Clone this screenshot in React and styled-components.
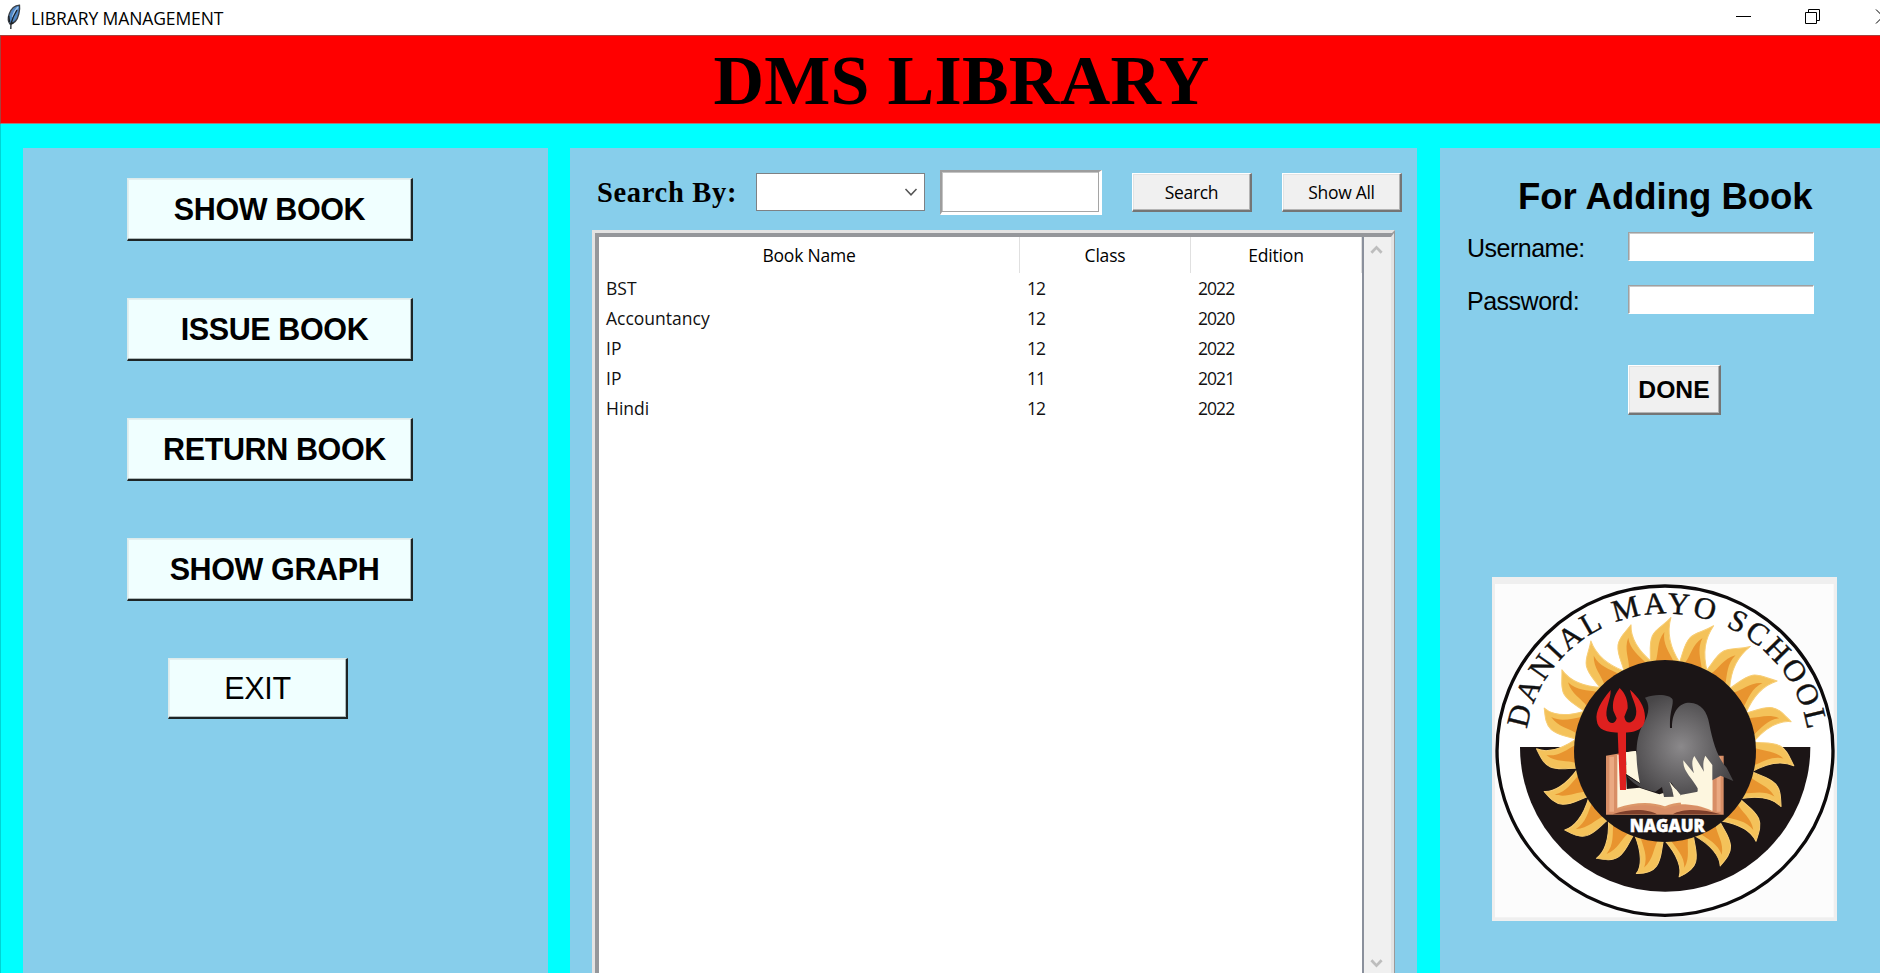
import React from "react";
import styled, { createGlobalStyle } from "styled-components";

const sans = '"Liberation Sans", Arial, sans-serif';
const serif = '"Liberation Serif", "Times New Roman", serif';
const ui = '"Open Sans", "Noto Sans", sans-serif';

const GlobalStyle = createGlobalStyle`
  * { box-sizing: border-box; }
  body { margin: 0; overflow: hidden; background: #00ffff; }
  button, input { margin: 0; border-radius: 0; outline: none; }
`;

const Window = styled.div`
  width: 1880px;
  height: 973px;
  overflow: hidden;
  display: flex;
  flex-direction: column;
  background: #00ffff;
  color: #000;
`;

const TitleBar = styled.header`
  flex: none;
  height: 35px;
  display: flex;
  align-items: flex-start;
  justify-content: space-between;
  background: #fff;
  padding-left: 6px;
`;

const TitleGroup = styled.div`
  display: flex;
  align-items: flex-start;
  gap: 8px;
  padding-top: 4px;
`;

const TitleText = styled.span`
  font: 17.5px/24px ${ui};
  letter-spacing: -0.1px;
  padding-top: 2px;
`;

const WindowControls = styled.div`
  display: flex;
  align-items: flex-start;
  gap: 54px;
  height: 26px;
  padding-top: 4px;
`;

const Banner = styled.h1`
  flex: none;
  height: 89px;
  margin: 0;
  padding-left: 42px;
  border: solid #a8403c;
  border-width: 1px 0 1px 1px;
  border-bottom-color: #a08080;
  background: #ff0000;
  text-align: center;
  font: bold 70px/90px ${serif};
  letter-spacing: 0.25px;
`;

const Body = styled.main`
  flex: 1;
  min-height: 0;
  display: flex;
  gap: 22px;
  padding: 24px 0 0 22px;
  border-left: 1px solid #00d4d4;
`;

const Panel = styled.section`
  flex: none;
  width: ${(p) => p.$width}px;
  height: 830px;
  background: #87ceeb;
`;

const MenuPanel = styled(Panel)`
  display: flex;
  flex-direction: column;
  align-items: flex-start;
  gap: 57px;
  padding: 30px 0 0 104px;
`;

const MenuButton = styled.button`
  width: ${(p) => (p.$small ? 180 : 286)}px;
  height: ${(p) => (p.$small ? 61 : 63)}px;
  margin-left: ${(p) => (p.$small ? 41 : 0)}px;
  padding: 0 0 0 ${(p) => p.$indent || 0}px;
  border: solid;
  border-width: 1px 2px 2px 1px;
  border-color: #dcebec #1d2526 #1d2526 #dcebec;
  box-shadow: inset -1px -1px #aebbbb, inset 1px 1px #e3f0f0;
  background: #f0ffff;
  color: #000;
  font: ${(p) => (p.$small ? "normal" : "bold")} 30.5px/34px ${sans};
  letter-spacing: -0.38px;
  white-space: nowrap;
`;

const BooksPanel = styled(Panel)`
  padding: 22px 0 0 22px;
`;

const SearchBar = styled.div`
  display: flex;
  align-items: flex-start;
  height: 60px;
  padding-left: 5px;
`;

const SearchLabel = styled.label`
  width: 159px;
  padding-top: 7px;
  font: bold 28.5px/32px ${serif};
  letter-spacing: 0.68px;
  white-space: nowrap;
`;

const Combo = styled.div`
  display: flex;
  align-items: center;
  justify-content: flex-end;
  width: 169px;
  height: 38px;
  margin-top: 3px;
  padding-right: 6px;
  border: 1.5px solid #7e8184;
  background: #fff;
`;

const SearchInput = styled.input`
  width: 162px;
  height: 45px;
  margin-left: 15px;
  padding: 4px;
  border: solid;
  border-width: 2px 3px 3px 2px;
  border-color: #9d9d9d #fff #fff #9d9d9d;
  box-shadow: inset -1px -1px #a5a5a5, inset 1px 1px #c4c4c4;
  background: #fff;
`;

const ToolButton = styled.button`
  width: 120px;
  height: 39px;
  margin: 3px 0 0 30px;
  padding: 0;
  border: solid;
  border-width: 1px 2px 2px 1px;
  border-color: #fff #757575 #757575 #fff;
  box-shadow: inset -1px -1px #b4b4b4, inset 1px 1px #e3e3e3;
  background: #f0f0f0;
  color: #000;
  font: 17.5px/24px ${ui};
  letter-spacing: -0.3px;
`;

const TableFrame = styled.div`
  display: flex;
  width: 803px;
  height: 800px;
  border: 3px solid;
  border-color: #e3e3e3 #9a9a9a #9a9a9a #e3e3e3;
`;

const TableInner = styled.div`
  display: flex;
  flex: 1;
  border: solid;
  border-width: 4px 3px 3px 4px;
  border-color: #95979b #e3e3e3 #e3e3e3 #95979b;
`;

const Table = styled.table`
  flex: none;
  width: 763px;
  height: 186px;
  table-layout: fixed;
  border-collapse: separate;
  border-spacing: 0;
  font: 17.5px/24px ${ui};
`;

const TableArea = styled.div`
  flex: 1;
  background: #fff;
  border-right: 2px solid #8a909c;
`;

const HeadCell = styled.th`
  height: 36px;
  padding: 0 0 1px;
  border-right: 1.5px solid #e0e0e0;
  font-weight: 400;
  letter-spacing: -0.2px;
`;

const Cell = styled.td`
  height: 30px;
  padding: 0 0 0 ${(p) => (p.$number ? 7 : 7)}px;
  color: #111;
  letter-spacing: ${(p) => (p.$number ? "-0.95px" : "0")};
`;

const ScrollBar = styled.div`
  width: 27px;
  height: 737px;
  display: flex;
  flex-direction: column;
  align-items: center;
  justify-content: space-between;
  padding: 8px 2px 6px 0;
  background: #f0f0f0;
`;

const AddPanel = styled(Panel)`
  margin-left: 1px;
  padding: 26px 0 0 27px;
`;

const Heading = styled.h2`
  width: 391px;
  height: 58px;
  margin: 0;
  padding: 1px 0 0 51px;
  font: bold 36.5px/44px ${sans};
  white-space: nowrap;
`;

const Field = styled.div`
  display: flex;
  align-items: flex-start;
  height: 52.5px;
`;

const FieldLabel = styled.label`
  width: 161px;
  padding-top: 2px;
  font: 25px/28px ${sans};
  letter-spacing: -0.5px;
`;

const FieldInput = styled.input`
  width: 186px;
  height: 29px;
  padding: 2px;
  border: 1px solid;
  border-color: #a0a0a0 #fff #fff #a0a0a0;
  box-shadow: inset 1px 1px #c8c8c8;
  background: #fff;
`;

const DoneButton = styled(ToolButton)`
  width: 93px;
  height: 50px;
  margin: 28px 0 0 161px;
  font: bold 24.7px/28px ${sans};
  letter-spacing: 0;
  display: block;
`;

const LogoFrame = styled.div`
  width: 345px;
  height: 344px;
  margin: 162px 0 0 25px;
`;

const Feather = () => (
  <svg width="17" height="26" viewBox="0 0 17 26">
    <path d="M13.5 1.2 C9 1.5 5 5 3.2 10 C1.8 14 1.8 17.5 4 20 C8 19.5 11.5 15.5 12.8 10 C13.5 7 14 4 13.5 1.2Z" fill="#4f86c4" stroke="#3a3f46" strokeWidth="1.3" />
    <path d="M12 3 C9 6 7.5 9 6.5 13" stroke="#9cc4ee" strokeWidth="1.6" fill="none" />
    <path d="M11 6 C8.5 10 6.5 14 5.2 19 M2.8 12 L3.6 18 M4.8 25 L5 18.5 M7.5 18.5 L5.5 20" stroke="#1b1e22" strokeWidth="1.3" fill="none" />
  </svg>
);

const Chevron = ({ up, width = 14, color = "#555", weight = 1.5 }) => (
  <svg width={width} height="10" viewBox="0 0 14 10">
    <path d={up ? "M1.5 8 L7 2.2 L12.5 8" : "M1.5 2 L7 7.8 L12.5 2"} fill="none" stroke={color} strokeWidth={weight} />
  </svg>
);

const rays = [
  [575, 158], [455, 180], [335, 228], [248, 315], [195, 430], [172, 552], [195, 680],
  [257, 795], [352, 880], [472, 925], [600, 935], [723, 902], [830, 828], [905, 724],
  [943, 602], [935, 470], [893, 348], [813, 245], [703, 183],
];

const Ray = ({ tip: [x, y] }) => {
  const dx = x - 557;
  const dy = y - 557;
  const reach = Math.hypot(dx, dy);
  const angle = (Math.atan2(dx, -dy) * 180) / Math.PI - 2.9;
  return (
    <g transform={`translate(557 557) rotate(${angle})`}>
      <path
        d={`M-43 -262 C-40 -290 -48 -318 -36 -345 C-26 -366 -4 -374 20 ${-reach} C8 -358 12 -316 47 -262Z`}
        fill="#f4c25a" stroke="#f7cd74" strokeWidth="3" strokeLinejoin="round"
      />
      <path d="M-27 -266 C-16 -295 -24 -326 0 -356 C-6 -320 14 -296 28 -266Z" fill="#e8942f" />
    </g>
  );
};

const Logo = () => (
  <svg width="345" height="344" viewBox="38 36 1035 1032" preserveAspectRatio="none">
    <defs>
      <radialGradient id="bird" gradientUnits="userSpaceOnUse" cx="605" cy="545" r="165">
        <stop offset="0" stopColor="#8b898b" />
        <stop offset="1" stopColor="#484648" />
      </radialGradient>
      <path id="arc" d="M143 492 A420 411 0 0 1 557 146 A432 411 0 0 1 986 507" />
    </defs>
    <rect x="38" y="36" width="1035" height="1032" fill="#efefef" />
    <rect x="47" y="57" width="1016" height="1000" fill="#fcfcfc" />
    <ellipse cx="557" cy="557" rx="504" ry="494" fill="#fff" stroke="#0c0a0b" strokeWidth="10" />
    <path d="M122 546 H993 A435 434 0 0 1 122 546Z" fill="#1c1516" />
    {rays.map((tip) => <Ray key={tip.join()} tip={tip} />)}
    <circle cx="557" cy="558" r="273" fill="#1b1516" />
    <text fontFamily={serif} fontSize="92" fill="#111" stroke="#111" strokeWidth="1.2">
      <textPath href="#arc" textLength="1186">DANIAL MAYO SCHOOL</textPath>
    </text>
    <path d="M380 572 L440 562 V600 H700 V572 H733 V749 H380Z" fill="#d88e66" />
    <path d="M390 575 H404 V740 H390Z M712 575 H724 V740 H712Z" fill="#eaa982" />
    <path d="M440 562 L470 558 L483 655 L443 628Z" fill="#fdf6df" />
    <path d="M414 570 V732 C465 715 515 712 555 728 C600 708 655 715 699 738 V590 L640 620 L560 690 L500 650 L440 625 V566Z" fill="#fdf6df" />
    <path d="M440 626 L485 655 L475 560 H700 V610 L650 670 L600 670 L540 688 L480 668 L442 672Z" fill="#1b1516" />
    <path d="M440 562 L470 558 L483 655 L443 628Z" fill="#fdf6df" />
    <path d="M414 732 C465 715 515 712 557 728 C600 708 655 715 699 738" fill="none" stroke="#dc9769" strokeWidth="7" />
    <path d="M400 748 C460 728 510 734 533 748Z M580 748 C610 730 670 732 725 748Z" fill="#7d3f2b" />
    <path d="M497 398 C530 385 574 389 580 404 C582 425 570 440 572 489 H578 C578 435 603 413 630 413 C666 414 684 440 690 478 C700 530 715 580 742 608 L762 648 L724 632 L690 650 L650 684 L603 692 L574 650 L583 695 L554 696 L548 666 L528 680 C500 674 470 668 442 632 L482 656 C466 580 468 520 490 480 C508 450 514 422 497 398Z" fill="url(#bird)" />
    <path d="M655 670 C640 640 610 620 612 586 L644 625 C638 600 636 588 645 573 L674 620 C670 600 672 585 678 572 L699 600 V738 C670 724 640 718 605 718 L603 690 L655 680Z M570 650 L604 690 L586 694Z" fill="#fdf6df" />
    <path d="M414 475 H440 V675 H422Z" fill="#df201f" />
    <path d="M394 375 C364 410 348 440 352 465 C355 495 380 503 425 503 C475 503 498 490 497 455 C496 424 479 398 452 374 C458 404 480 432 467 459 C458 477 438 478 435 455 L445 430 C446 408 439 386 421 369 C404 390 398 415 402 437 L412 460 C408 480 389 477 384 462 C374 434 395 405 394 375Z" fill="#df201f" />
    <text x="451" y="801" fontFamily={ui} fontWeight="800" fontSize="51" textLength="226" lengthAdjust="spacingAndGlyphs" fill="#fff" stroke="#fff" strokeWidth="1.5">NAGAUR</text>
  </svg>
);

const books = [
  ["BST", "12", "2022"],
  ["Accountancy", "12", "2020"],
  ["IP", "12", "2022"],
  ["IP", "11", "2021"],
  ["Hindi", "12", "2022"],
];

export default function App() {
  return (
    <Window>
      <GlobalStyle />
      <TitleBar>
        <TitleGroup>
          <Feather />
          <TitleText>LIBRARY MANAGEMENT</TitleText>
        </TitleGroup>
        <WindowControls>
          <svg width="15" height="16" viewBox="0 0 15 16"><path d="M0 12.5 H15" stroke="#000" /></svg>
          <svg width="15" height="20" viewBox="0 0 15 20">
            <path d="M0.5 8.5 H11.5 V19.5 H0.5Z M3.5 8.5 V5.5 H14.5 V16.5 H11.5" fill="none" stroke="#000" />
          </svg>
          <svg width="6" height="20" viewBox="0 0 6 20"><path d="M2 5 L9 12 L2 19" transform="translate(0 .5)" fill="none" stroke="#000" /></svg>
        </WindowControls>
      </TitleBar>
      <Banner>DMS LIBRARY</Banner>
      <Body>
        <MenuPanel $width={525}>
          <MenuButton>SHOW BOOK</MenuButton>
          <MenuButton $indent={10}>ISSUE BOOK</MenuButton>
          <MenuButton $indent={10}>RETURN BOOK</MenuButton>
          <MenuButton $indent={10}>SHOW GRAPH</MenuButton>
          <MenuButton $small>EXIT</MenuButton>
        </MenuPanel>
        <BooksPanel $width={847}>
          <SearchBar>
            <SearchLabel>Search By:</SearchLabel>
            <Combo><Chevron /></Combo>
            <SearchInput />
            <ToolButton>Search</ToolButton>
            <ToolButton>Show All</ToolButton>
          </SearchBar>
          <TableFrame>
            <TableInner>
              <TableArea>
                <Table>
                  <colgroup><col width="421" /><col width="171" /><col width="171" /></colgroup>
                  <thead>
                    <tr>{["Book Name", "Class", "Edition"].map((h) => <HeadCell key={h}>{h}</HeadCell>)}</tr>
                  </thead>
                  <tbody>
                    {books.map((row, i) => (
                      <tr key={i}>
                        {row.map((value, j) => <Cell key={j} $number={j > 0}>{value}</Cell>)}
                      </tr>
                    ))}
                  </tbody>
                </Table>
              </TableArea>
              <ScrollBar>
                <Chevron up color="#bdbdbd" weight={3} width={13} />
                <Chevron color="#bdbdbd" weight={3} width={13} />
              </ScrollBar>
            </TableInner>
          </TableFrame>
        </BooksPanel>
        <AddPanel $width={440}>
          <Heading>For Adding Book</Heading>
          <Field><FieldLabel>Username:</FieldLabel><FieldInput /></Field>
          <Field><FieldLabel>Password:</FieldLabel><FieldInput type="password" /></Field>
          <DoneButton>DONE</DoneButton>
          <LogoFrame><Logo /></LogoFrame>
        </AddPanel>
      </Body>
    </Window>
  );
}
